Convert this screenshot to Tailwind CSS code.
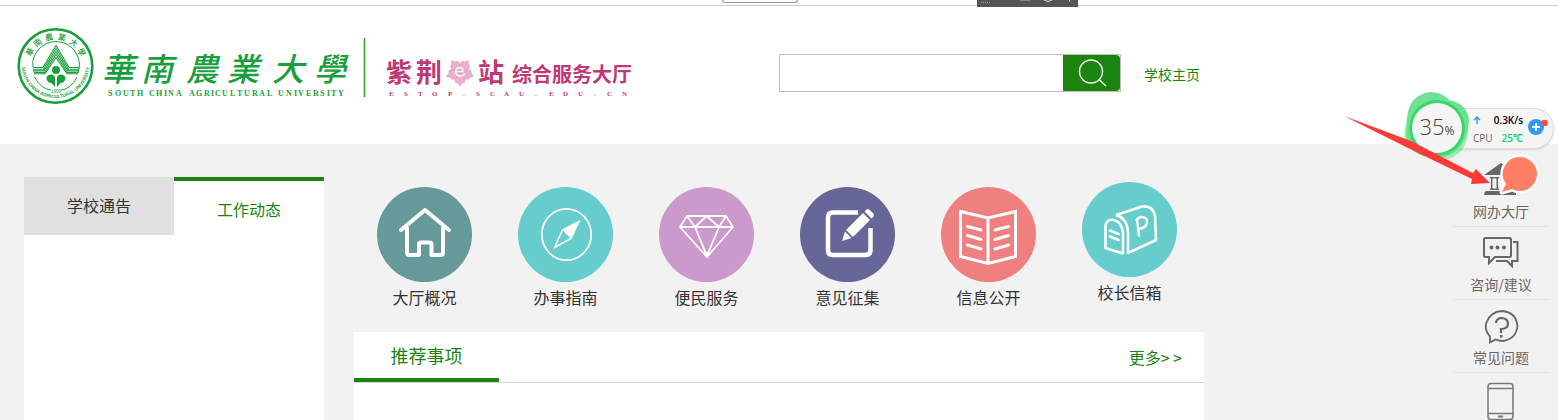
<!DOCTYPE html>
<html lang="zh-CN">
<head>
  <meta charset="UTF-8">
  <meta name="viewport" content="width=device-width, initial-scale=1.0">
  <title>华南农业大学 紫荆e站 综合服务大厅</title>
  <script src="https://cdn.jsdelivr.net/npm/@tailwindcss/browser@4"></script>
</head>
<body class="relative flex h-screen flex-col overflow-hidden bg-[#f2f2f2] font-['Noto_Sans_CJK_SC',sans-serif] text-base text-[#333]">

  <!-- 浏览器边缘 -->
  <div class="h-[6px] shrink-0 border-b border-[#ccc] bg-white"></div>
  <div class="absolute left-[722px] top-0 h-[3px] w-[76px] rounded-b border border-t-0 border-[#999] bg-white"></div>
  <div class="absolute left-[977px] top-0 h-[7px] w-[101px] bg-[#555]">
    <svg class="block h-[7px] w-full" viewBox="0 0 101 7" fill="none">
      <path d="M4 2.500H13" stroke="#999" stroke-dasharray="1 1"/>
      <path d="M43 0H53" stroke="#888" stroke-width="2"/>
      <path d="M67 0Q71 3 75 0" stroke="#ddd" stroke-width="1"/>
      <path d="M92.500 0V1.500" stroke="#fff"/>
    </svg>
  </div>

  <!-- 页头 -->
  <header class="flex h-[138px] shrink-0 items-start bg-white pt-5">
    <a href="#" class="shrink-0" aria-label="华南农业大学 紫荆e站">
      <svg class="block h-20 w-[640px]" viewBox="0 26 640 80">
        <defs>
          <path id="sealBottom" d="M21.500 64A34 34 0 1 0 89.500 64"/>
        </defs>
        <!-- 校徽 -->
        <g fill="none" stroke="#18a03c">
          <circle cx="55.500" cy="66" r="36.800" stroke-width="2.600"/>
          <path d="M34 57A23 23 0 1 1 78 73M34 57Q32 61 33 67M34.500 77Q41 89 51 90M77 77Q71 89 61 90" stroke-width="1"/>
          <g stroke-width="1.100">
            <path d="M33 67.500H43L56 45.500L69 67.500H79"/>
            <path d="M33 69.200H43.500L56 48.500L68.500 69.200H79"/>
            <path d="M33 70.900H44L56 51.500L68 70.900H79"/>
            <path d="M34 72.500H44.500L56 54.500L67.500 72.500H78"/>
            <path d="M34 73.700H45L56 57.500L67 73.700H78"/>
          </g>
        </g>
        <g fill="#18a03c">
          <circle cx="56" cy="70" r="4"/>
          <path d="M55 77Q54 74 50 74.500Q46 76 46.500 79Q48 83 52 83.500L55 87ZM57 77Q58 74 62 74.500Q66 76 65.500 79Q64 83 60 83.500L57 87Z"/>
          <text x="51" y="93" font-family="Liberation Sans" font-size="4.500">1909</text>
          <g font-family="Noto Sans CJK SC, sans-serif" font-size="8" font-weight="500" text-anchor="middle">
            <text x="55.500" y="39.500" transform="rotate(-61 55.500 66)">華</text>
            <text x="55.500" y="39.500" transform="rotate(-37 55.500 66)">南</text>
            <text x="55.500" y="39.500" transform="rotate(-13 55.500 66)">農</text>
            <text x="55.500" y="39.500" transform="rotate(13 55.500 66)">業</text>
            <text x="55.500" y="39.500" transform="rotate(38 55.500 66)">大</text>
            <text x="55.500" y="39.500" transform="rotate(62 55.500 66)">學</text>
          </g>
          <text font-family="Liberation Sans" font-size="4.700" font-weight="700" text-anchor="middle"><textPath href="#sealBottom" startOffset="50%">SOUTH CHINA AGRICULTURAL UNIVERSITY</textPath></text>
          <!-- 校名 -->
          <g font-family="Noto Sans CJK SC, sans-serif" font-size="32" font-weight="500" font-style="italic">
            <text x="102" y="81">華</text>
            <text x="141" y="81">南</text>
            <text x="186" y="81">農</text>
            <text x="227" y="81">業</text>
            <text x="272" y="81">大</text>
            <text x="314" y="81">學</text>
          </g>
          <g font-family="Liberation Serif, serif" font-size="8" font-weight="700">
            <text y="96" x="108 115 123 130 137">SOUTH</text>
            <text y="96" x="149 156 164 168 176">CHINA</text>
            <text y="96" x="189 196 204 211 215 222 230 237 244 252 259 267">AGRICULTURAL</text>
            <text y="96" x="278 286 294 298 306 313 320 327 331 338">UNIVERSITY</text>
          </g>
        </g>
        <path d="M364.500 38V97" stroke="#36a41c" stroke-width="1.600"/>
        <!-- 站名 -->
        <g fill="#bf3a74" font-family="Noto Sans CJK SC, sans-serif" font-weight="700">
          <text x="386" y="82" font-size="26">紫</text>
          <text x="416" y="82" font-size="26">荆</text>
          <text x="478" y="82" font-size="26">站</text>
          <text x="512" y="82" font-size="20">综合服务大厅</text>
          <text y="96" x="389 404 418 432 448 463 476 490 504 519 535 549 563 578 594 607 622" font-family="Liberation Serif, serif" font-size="7">ESTOP.SCAU.EDU.CN</text>
        </g>
        <g fill="#ebb0cb" stroke="#d98db2" stroke-width=".6" stroke-linejoin="round">
          <path id="petal" d="M460 72Q454 67 455.500 62L458 61L460 58L462 61L464.500 62Q466 67 460 72Z" transform="rotate(-36 460 72)"/>
          <use href="#petal" transform="rotate(72 460 72)"/>
          <use href="#petal" transform="rotate(144 460 72)"/>
          <use href="#petal" transform="rotate(216 460 72)"/>
          <use href="#petal" transform="rotate(288 460 72)"/>
        </g>
        <path d="M456.500 71.500H463Q463 67.500 459.500 67.500Q455.500 68 455.500 72Q456.500 76 460 76Q463 76 465 74" fill="none" stroke="#fff" stroke-width="1.400"/>
      </svg>
    </a>
    <form class="ml-[139px] mt-7 flex h-[38px] w-[342px] border border-[#bfbfbf]">
      <input id="keyword" type="text" aria-label="搜索" class="min-w-0 flex-1 px-2 outline-none">
      <button type="button" aria-label="搜索" class="flex w-[57px] items-center justify-center rounded-r bg-[#1a840e]">
        <svg class="size-8" viewBox="0 0 32 32" fill="none" stroke="#fff" stroke-width="1.400">
          <circle cx="15" cy="14.500" r="11.500"/>
          <path d="M23 22.500L30 29"/>
        </svg>
      </button>
    </form>
    <a href="#" class="ml-[23px] mt-9 text-sm leading-6 text-[#1a840e]">学校主页</a>
  </header>

  <main class="flex min-h-0 max-w-[1204px] flex-1 gap-[30px] pl-6 pt-[33px]">
    <!-- 通告 -->
    <section class="w-[300px] shrink-0 bg-white">
      <div class="flex items-start">
        <button type="button" class="h-[58px] flex-1 bg-[#e0e0e0] pb-0.5">学校通告</button>
        <button type="button" class="h-[62px] flex-1 border-t-4 border-[#1a840e] pb-0.5 text-[#1a840e]">工作动态</button>
      </div>
    </section>

    <div class="flex min-w-0 flex-1 flex-col">
      <!-- 导航图标 -->
      <nav class="grid h-[155px] shrink-0 grid-cols-6 pr-1 pt-[10px] leading-[30px]">
        <a href="#" class="flex flex-col items-center">
          <span class="size-[95px] rounded-full bg-[#669999]">
            <svg viewBox="0 0 95 95" fill="none" stroke="#fff" stroke-width="4" stroke-linecap="round" stroke-linejoin="round">
              <path d="M24 43L48 23L72 43"/>
              <path d="M30 41V65Q30 68 32 68H42V57Q42 55.500 44 55.500H52.500Q54.500 55.500 54.500 57V68H64Q66 68 66 65V41"/>
            </svg>
          </span>
          大厅概况
        </a>
        <a href="#" class="flex flex-col items-center">
          <span class="size-[95px] rounded-full bg-[#66cccc]">
            <svg viewBox="0 0 95 95" fill="none" stroke="#fff" stroke-width="1.800">
              <ellipse cx="48.500" cy="47.500" rx="24.700" ry="25.700"/>
              <path d="M61 34.500L44.500 43L36.500 60.500L53 51.500Z" stroke-width="1.500"/>
              <path d="M61 34.500L44.500 43L53 51.500Z" fill="#fff" stroke="none"/>
            </svg>
          </span>
          办事指南
        </a>
        <a href="#" class="flex flex-col items-center">
          <span class="size-[95px] rounded-full bg-[#cc99cc]">
            <svg viewBox="0 0 95 95" fill="none" stroke="#fff" stroke-width="1.800" stroke-linejoin="round">
              <path d="M28 29H67L74 40L48 70L21 40ZM21 40H74M28 29L36 40L48 69L60 40L67 29M36 40L47.500 29L60 40"/>
              <path d="M45 65L48 71L51 65Z" fill="#fff" stroke="none"/>
            </svg>
          </span>
          便民服务
        </a>
        <a href="#" class="flex flex-col items-center">
          <span class="size-[95px] rounded-full bg-[#666699]">
            <svg viewBox="0 0 95 95" fill="none" stroke="#fff">
              <path d="M58 25.500H33Q28 25.500 28 30.500V63Q28 68 33 68H65Q70.500 68 70.500 63V41" stroke-width="4.500"/>
              <path d="M63 26L70 33L53 50L46 43Z" fill="#fff" stroke="none"/>
              <path d="M64.500 24.500L66.500 22.500Q68 21.500 69.500 22.700L73.500 26.800Q74.500 28 73.500 29.500L71.500 31.500Z" fill="#fff" stroke="none"/>
              <path d="M45 44.500L51.500 51L42 54Z" fill="#fff" stroke="none"/>
            </svg>
          </span>
          意见征集
        </a>
        <a href="#" class="flex flex-col items-center">
          <span class="size-[95px] rounded-full bg-[#f08080]">
            <svg viewBox="0 0 95 95" fill="none" stroke="#fff" stroke-width="3">
              <path d="M47 31L19.500 24.500V69.500L47 76.500L74.500 69.500V24.500ZM47 31V76"/>
              <path d="M26.500 39.500L40 43M26.500 48.500L40 52.500M26.500 58L40 62M67.500 39.500L54 43M67.500 48.500L54 52.500M67.500 58L54 62" stroke-linecap="round"/>
            </svg>
          </span>
          信息公开
        </a>
        <a href="#" class="-mt-[5px] flex flex-col items-center">
          <span class="size-[95px] rounded-full bg-[#66cccc]">
            <svg viewBox="0 0 95 95" fill="none" stroke="#fff" stroke-width="2.600" stroke-linejoin="round">
              <path d="M23.500 66V45Q24 36.500 32 38Q40 40 41 51V71.500Z"/>
              <path d="M34 33L60 24.500Q71 23 73 34L74 58L46 71V50Q45 36 34 33"/>
              <path d="M28 48.500L36.500 52M28 54.500L36.500 58" stroke-linecap="round"/>
              <path d="M57 53.500L55 38M54.500 38Q57 34.500 60 35Q66 35.500 65 41Q63 47 56.500 46.500" stroke-width="2.400" stroke-linecap="round"/>
            </svg>
          </span>
          校长信箱
        </a>
      </nav>

      <!-- 推荐事项 -->
      <section class="flex-1 bg-white">
        <div class="flex items-start justify-between border-b border-[#d8d8d8]">
          <h2 class="h-[50px] w-[145px] border-b-4 border-[#1a840e] text-center text-lg leading-[46px] text-[#1a840e]">推荐事项</h2>
          <a href="#" class="pr-[22px] leading-[50px] text-[#1a840e]">更多&gt; &gt;</a>
        </div>
      </section>
    </div>
  </main>

  <!-- 右侧快捷栏 -->
  <aside class="absolute bottom-0 right-[9px] top-[154px] w-24 overflow-hidden text-center text-sm leading-[26px] text-[#666]">
    <a href="#" class="flex flex-col items-center border-b border-[#e4e4e4] pb-0.5 pt-2">
      <svg class="h-9 w-10" viewBox="0 0 40 36" fill="#666">
        <path d="M3 13L20 1L37 13ZM5 29H35V33H3Q3 30 5 29Z"/>
        <path d="M9 15H18V16.500H9ZM10 16H11.500V28H10ZM15.500 16H17V28H15.500ZM9 26.500H18V28H9Z"/>
      </svg>
      网办大厅
    </a>
    <a href="#" class="flex flex-col items-center border-b border-[#e4e4e4] pb-0.5 pt-2">
      <svg class="h-9 w-10" viewBox="0 0 40 36" fill="none" stroke="#666" stroke-width="2">
        <path d="M4.500 3H28.500Q30 3 30 4.500V20.500Q30 22 28.500 22H14L8 28V22H4.500Q3 22 3 20.500V4.500Q3 3 4.500 3Z"/>
        <path d="M32 7H36.500V26H31V31L26 26H15"/>
        <path d="M8.500 12.500A2 2 0 1 0 12.500 12.500A2 2 0 1 0 8.500 12.500M14.500 12.500A2 2 0 1 0 18.500 12.500A2 2 0 1 0 14.500 12.500M21 12.500A2 2 0 1 0 25 12.500A2 2 0 1 0 21 12.500" fill="#666" stroke="none"/>
      </svg>
      咨询/建议
    </a>
    <a href="#" class="flex flex-col items-center border-b border-[#e4e4e4] pb-0.5 pt-2">
      <svg class="h-9 w-10" viewBox="0 0 40 36" fill="none" stroke="#666" stroke-width="1.800">
        <path d="M9 28.500Q3 22 5.500 14.500Q9.500 3.500 21 3Q35 4 36.500 18Q35 31 22 33Q18 33 14.500 31.500L9 34.500Z"/>
        <path d="M15 15Q15.500 10 21 10Q27 10.500 27 16Q26.500 21 20 21V25" stroke-width="2.200"/>
        <path d="M19 27H21.500V29.500H19Z" fill="#666" stroke="none"/>
      </svg>
      常见问题
    </a>
    <a href="#" aria-label="手机版" class="flex flex-col items-center pt-2">
      <svg class="h-10 w-10" viewBox="0 0 40 40" fill="none" stroke="#777" stroke-width="1.500">
        <rect x="7" y="2.500" width="25" height="36" rx="3"/>
        <path d="M7 7.500H32M7 32.500H32"/>
        <path d="M17 35.500H22" stroke-width="2"/>
      </svg>
    </a>
  </aside>

  <!-- 消息气泡 -->
  <svg class="absolute right-[18px] top-[154px] h-11 w-[42px]" viewBox="0 0 42 44">
    <path d="M22.500 3A17 17 0 1 1 14 35L4 38L8 30A17 17 0 0 1 22.500 3Z" fill="#ff7f66" stroke="#fff" stroke-width="5" stroke-linejoin="round"/>
    <path d="M22.500 3A17 17 0 1 1 14 35L4 38L8 30A17 17 0 0 1 22.500 3Z" fill="#ff7f66"/>
  </svg>

  <!-- 系统监控悬浮球 -->
  <div class="absolute right-[4px] top-[108px] flex h-[41px] w-[122px] items-center rounded-full border border-[#ddd] bg-[#f5f5f5] pl-10 font-['Open_Sans',sans-serif] shadow">
    <div class="w-[50px] text-[10px] leading-[18px]">
      <div class="flex items-center justify-between font-semibold text-black">
        <svg class="size-2" viewBox="0 0 8 8" fill="none" stroke="#3296fa" stroke-width="1.400"><path d="M4 8V1M1 4L4 1L7 4"/></svg>
        <span>0.3K/s</span>
      </div>
      <div class="flex justify-between whitespace-nowrap text-[#666]"><span>CPU</span> <span class="font-semibold text-[#0fd364]">25℃</span></div>
    </div>
    <svg class="ml-1 h-5 w-[22px]" viewBox="0 0 22 20">
      <circle cx="9" cy="8" r="8" fill="#3296fa"/>
      <path d="M9 4V12M5 8H13" stroke="#fff" stroke-width="2"/>
      <circle cx="17.500" cy="4" r="3.300" fill="#f5522d"/>
    </svg>
  </div>
  <div class="absolute right-[86px] top-[90px] flex h-[72px] w-[70px] items-center justify-center font-['Open_Sans',sans-serif] text-[#444]">
    <svg class="absolute inset-0 size-full" viewBox="0 0 70 72">
      <path d="M5 30Q6 5 28 2Q40 2 47 10Q66 14 67 31Q64 66 35 68Q6 66 4 47Z" fill="#22d160" fill-opacity=".65"/>
      <path d="M6 26Q18 9 42 9Q64 12 66 34Q68 62 46 69Q14 71 3 50Q1 40 6 26Z" fill="#6be886" fill-opacity=".6"/>
      <circle cx="35" cy="38" r="28" fill="#22d160" fill-opacity=".7"/>
      <circle cx="35" cy="38" r="25" fill="#f5f5f5"/>
    </svg>
    <span class="relative text-[22px] font-light">35<span class="text-xs font-normal">%</span></span>
  </div>

  <!-- 指示箭头 -->
  <svg class="absolute right-[66px] top-[112px] h-20 w-[150px]" viewBox="0 0 150 80">
    <path d="M2 4L69 29L131 61L134 57L148 71L129 72L130 67L66 36Z" fill="#ff3a38"/>
  </svg>
</body>
</html>
